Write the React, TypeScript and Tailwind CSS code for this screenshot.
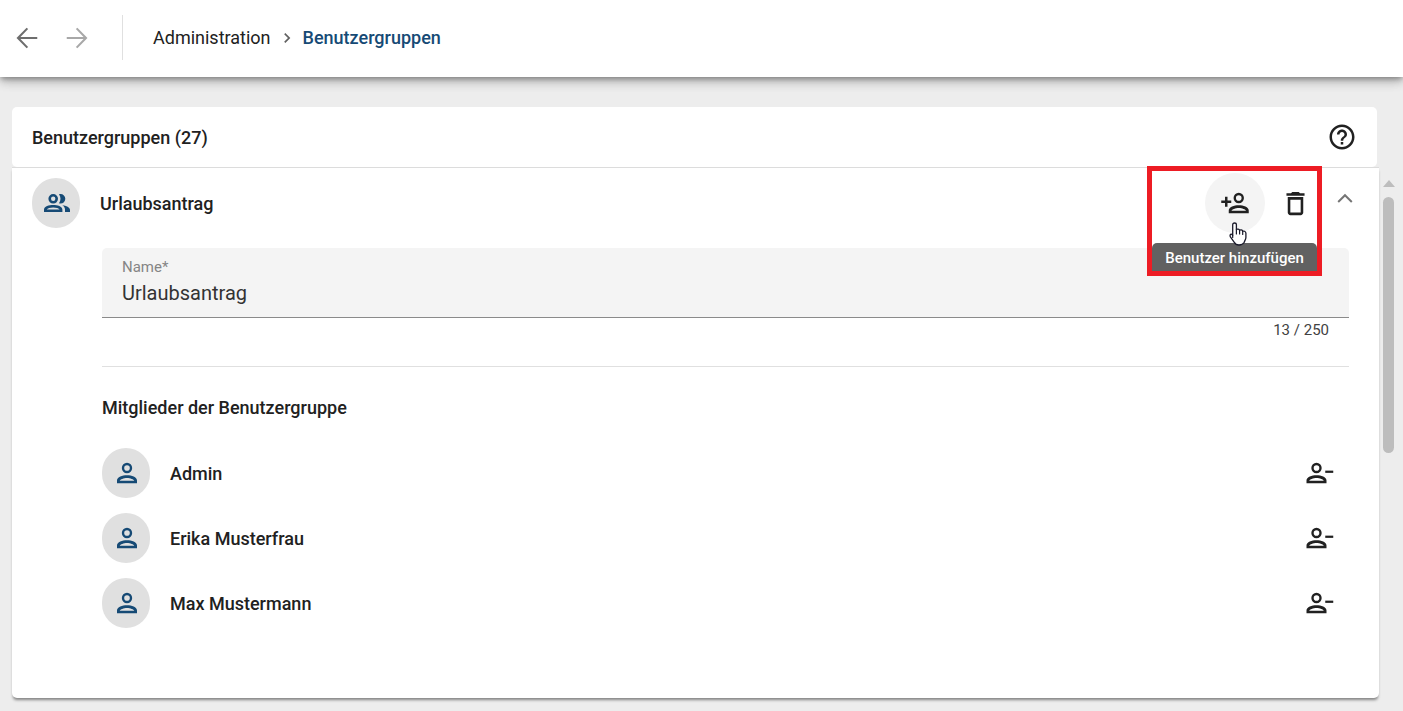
import { useState, type ReactNode } from 'react'
import { MdChevronRight, MdDeleteOutline, MdHelpOutline } from 'react-icons/md'

const MAX_LENGTH = 250

const members = ['Admin', 'Erika Musterfrau', 'Max Mustermann']

function PersonShape() {
    return (
        <>
            <circle cx="12" cy="8" r="3.2" fill="none" stroke="currentColor" strokeWidth="1.9" />
            <path
                fill="currentColor"
                fillRule="evenodd"
                d="M12 13.8c-3.700 0-8 1.400-8 4.200v2.100h16V18c0-2.800-4.300-4.200-8-4.200zM6.200 18.200c.4-1.200 3.100-2.300 5.800-2.300s5.400 1.100 5.800 2.300z"
            />
        </>
    )
}

function PersonIcon() {
    return (
        <svg viewBox="0 0 24 24" className="h-[30px] w-[30px]">
            <PersonShape />
        </svg>
    )
}

function PersonAddIcon() {
    return (
        <svg viewBox="0 0 24 24" className="h-[30px] w-[30px]">
            <g transform="translate(3 0)">
                <PersonShape />
            </g>
            <path d="M5 7V15M1 11H9" stroke="currentColor" strokeWidth="2" />
        </svg>
    )
}

function PersonRemoveIcon() {
    return (
        <svg viewBox="0 0 24 24" className="h-[30px] w-[30px]">
            <g transform="translate(-2 0)">
                <PersonShape />
            </g>
            <path d="M17 11H23.400" stroke="currentColor" strokeWidth="1.8" />
        </svg>
    )
}

function GroupIcon() {
    return (
        <svg viewBox="0 0 26 20" className="h-5 w-[26px]">
            <circle cx="9.2" cy="5.800" r="3.500" fill="none" stroke="currentColor" strokeWidth="2.600" />
            <path
                fill="currentColor"
                fillRule="evenodd"
                d="M9.200 12C5 12 0 13.400 0 16.800V19h18.400v-2.200C18.400 13.400 13.400 12 9.200 12zM2.800 16.600c.6-1.200 3.400-2 6.400-2s5.800.8 6.400 2z"
            />
            <path
                fill="currentColor"
                d="M15 1.300c.5-.2 1-.3 1.500-.3a4.800 4.800 0 0 1 0 9.600c-.5 0-1-.1-1.500-.3 2-2.700 2-6.300 0-9zM18.300 12.300c4 .6 7.700 2 7.700 4.700v2h-5v-2.500c0-1.800-1.100-3.200-2.700-4.200z"
            />
        </svg>
    )
}

function ArrowIcon({ className }: { className?: string }) {
    return (
        <svg viewBox="0 0 24 24" className={`h-[30px] w-[30px] ${className ?? ''}`}>
            <path d="M20.200 12H5M12.300 4.300L4.800 12L12.300 19.700" fill="none" stroke="currentColor" strokeWidth="1.7" />
        </svg>
    )
}

function Avatar({ children }: { children: ReactNode }) {
    return (
        <span className="flex h-[50px] w-12 shrink-0 items-center justify-center rounded-full bg-[#e0e0e0] pl-0.5 text-[#164a75]">
            {children}
        </span>
    )
}

function HandCursor() {
    return (
        <svg viewBox="0 0 18 24" className="pointer-events-none absolute left-6 top-[49px] z-30 h-6 w-[18px]">
            <path
                d="M5.5 1C6.6 1 7.4 1.8 7.4 2.8V7.6C8 6.9 10.3 7 10.6 8.4C11.3 7.6 13.3 7.8 13.7 9.3C14.6 8.7 16.7 9.2 16.9 11V15.4C16.9 17.5 15.6 18.6 15.3 20.2C14.2 22.2 12.3 23 10 23C7.6 23 6.2 22.2 5.3 20.4L1.4 14.9C.6 13.4 1.2 12.2 2.3 12.2C3 12.2 3.3 12.8 3.7 13.3V2.8C3.7 1.8 4.4 1 5.5 1Z"
                fill="#fff"
                stroke="#1b1b2b"
                strokeWidth="1.3"
                strokeLinejoin="round"
            />
            <path d="M7.4 7.6V12M10.6 8.4V12M13.7 9.3V12.5M3.7 13.3V15.5" fill="none" stroke="#1b1b2b" strokeWidth="1.2" strokeLinecap="round" />
        </svg>
    )
}

function TopBar() {
    return (
        <header className="relative z-10 flex h-[77px] items-center bg-white pb-0.5 pl-0.5 shadow-[0_3px_5px_-1px_rgba(0,0,0,0.3),0_5px_10px_rgba(0,0,0,0.16),0_1px_14px_rgba(0,0,0,0.14)]">
            <button aria-label="Zurück" className="flex h-[50px] w-[50px] items-center justify-center text-[#6e6e6e]">
                <ArrowIcon />
            </button>
            <button aria-label="Vorwärts" disabled className="flex h-[50px] w-[50px] items-center justify-center text-[#a8a8a8]">
                <ArrowIcon className="rotate-180" />
            </button>
            <div className="ml-5 h-[45px] w-px bg-[#e0e0e0]" />
            <nav className="ml-[30px] flex items-center text-lg">
                <a href="#administration">Administration</a>
                <MdChevronRight size={20} className="mx-1.5 text-[#616161]" />
                <a href="#benutzergruppen" aria-current="page" className="font-medium text-[#164a75]">
                    Benutzergruppen
                </a>
            </nav>
        </header>
    )
}

function GroupActions() {
    return (
        <div className="relative flex">
            <button aria-label="Benutzer hinzufügen" className="flex h-[60px] w-[60px] items-center justify-center rounded-full bg-[#f4f4f4]">
                <PersonAddIcon />
            </button>
            <button aria-label="Löschen" className="flex h-[60px] w-[60px] items-center justify-center rounded-full">
                <MdDeleteOutline size={31} />
            </button>

            <div className="pointer-events-none absolute -top-[7px] right-[3px] z-20 flex h-[110px] w-[175px] items-end border-[5px] border-[#ed1c24]">
                <div role="tooltip" className="w-full whitespace-nowrap rounded-t-[5px] bg-[#616161] pt-0.5 text-center text-[15px] font-medium leading-[26px] text-white">
                    Benutzer hinzufügen
                </div>
            </div>
            <HandCursor />
        </div>
    )
}

function Scrollbar() {
    return (
        <div aria-hidden="true" className="flex w-6 shrink-0 flex-col pl-1 pt-[73px]">
            <svg viewBox="0 0 12 7" className="h-[7px] w-3 text-[#bdbdbd]">
                <path d="M6 0L12 7H0Z" fill="currentColor" />
            </svg>
            <div className="mt-2.5 h-64 w-[11px] rounded-full bg-[#bdbdbd]" />
        </div>
    )
}

export default function App() {
    const [name, setName] = useState('Urlaubsantrag')
    const [open, setOpen] = useState(true)

    return (
        <div className="min-h-screen bg-[#ededed] font-['Roboto',sans-serif] text-[#212121]">
            <TopBar />

            <main className="flex pb-[13px] pl-3 pt-[30px]">
                <div className="min-w-0 flex-1">
                    <div className="mr-0.5 flex h-[60px] items-center justify-between rounded-[5px] bg-white px-5">
                        <h1 className="pt-0.5 text-lg font-medium">Benutzergruppen (27)</h1>
                        <button aria-label="Hilfe">
                            <MdHelpOutline size={30} />
                        </button>
                    </div>

                    <section className="rounded-b-[5px] border-t border-[#dcdcdc] bg-white shadow-[0_3px_3px_-1px_rgba(0,0,0,0.45)]">
                        <div className="flex h-[70px] items-center px-5">
                            <Avatar>
                                <GroupIcon />
                            </Avatar>
                            <h2 className="ml-5 flex-1 pt-0.5 text-lg font-medium">{name}</h2>
                            <GroupActions />
                            <button
                                aria-label="Gruppe einklappen"
                                aria-expanded={open}
                                onClick={() => setOpen(!open)}
                                className="ml-1.5 pb-2 text-[#757575]"
                            >
                                <svg viewBox="0 0 28 28" className="h-7 w-7">
                                    <path d="M7.200 17L14 10.200L20.800 17" fill="none" stroke="currentColor" strokeWidth="2" />
                                </svg>
                            </button>
                        </div>

                        {open && (
                            <div className="pb-[70px] pl-[90px] pr-[30px] pt-2.5">
                                <div className="rounded-t-[5px] border-b border-[#8a8a8a] bg-[#f4f4f4] px-5 pb-2.5 pt-[9px]">
                                    <label htmlFor="group-name" className="block text-[15px] leading-5 text-[#858585]">
                                        Name*
                                    </label>
                                    <input
                                        id="group-name"
                                        value={name}
                                        maxLength={MAX_LENGTH}
                                        onChange={e => setName(e.target.value)}
                                        className="mt-0.5 block h-7 w-full bg-transparent text-xl text-[#333333] outline-none"
                                    />
                                </div>
                                <div className="pr-5 text-right text-[15px] leading-6 text-[#424242]">
                                    {name.length} / {MAX_LENGTH}
                                </div>

                                <hr className="mt-6 border-[#e0e0e0]" />

                                <h3 className="mt-[29px] text-lg font-medium leading-6">Mitglieder der Benutzergruppe</h3>
                                <ul className="mt-7 flex flex-col gap-[15px]">
                                    {members.map(member => (
                                        <li key={member} className="flex items-center pr-[15px]">
                                            <Avatar>
                                                <PersonIcon />
                                            </Avatar>
                                            <span className="ml-5 flex-1 pt-0.5 text-lg font-medium">{member}</span>
                                            <button aria-label={`${member} entfernen`}>
                                                <PersonRemoveIcon />
                                            </button>
                                        </li>
                                    ))}
                                </ul>
                            </div>
                        )}
                    </section>
                </div>
                <Scrollbar />
            </main>
        </div>
    )
}
